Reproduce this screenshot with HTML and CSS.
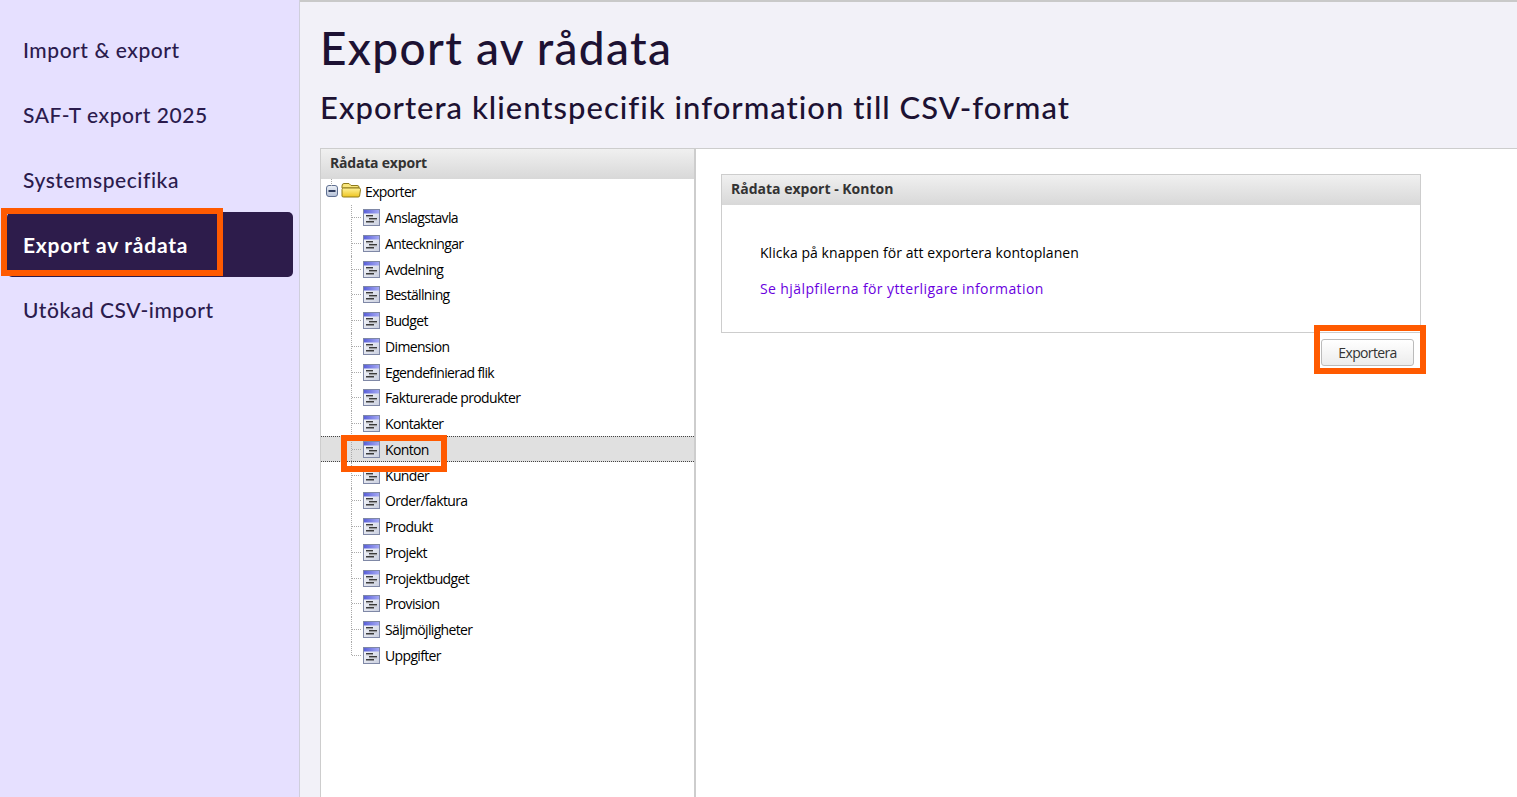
FILE: index.html
```html
<!DOCTYPE html>
<html lang="sv">

<head>
    <meta charset="UTF-8">
    <meta name="viewport" content="width=device-width, initial-scale=1.0">
    <title>Export av rådata</title>
    <link rel="stylesheet" href="styles.css">
</head>

<body>
    <svg class="icon-defs" width="0" height="0" aria-hidden="true">
        <defs>
            <linearGradient id="folder-fill" x1="0" y1="0" x2="0" y2="1">
                <stop offset="0" stop-color="#fff39a" />
                <stop offset="1" stop-color="#eec420" />
            </linearGradient>
            <linearGradient id="doc-fill" x1="0" y1="0" x2="1" y2="1">
                <stop offset="0" stop-color="#fbfcff" />
                <stop offset="1" stop-color="#c9cede" />
            </linearGradient>
            <linearGradient id="doc-bar" x1="0" y1="0" x2="1" y2="0">
                <stop offset="0" stop-color="#5a60d8" />
                <stop offset="1" stop-color="#a4a8f4" />
            </linearGradient>
            <linearGradient id="minus-fill" x1="0" y1="0" x2="0" y2="1">
                <stop offset="0" stop-color="#eef2f8" />
                <stop offset="1" stop-color="#b4c0d6" />
            </linearGradient>
            <symbol id="icon-doc" viewBox="0 0 17 17">
                <rect x="0.5" y="0.5" width="16" height="16" fill="url(#doc-fill)" stroke="#7f88a6" />
                <rect x="1" y="1" width="15" height="3.5" fill="url(#doc-bar)" />
                <rect x="3" y="6" width="7" height="1.5" fill="#3c3c3c" />
                <rect x="3" y="7.5" width="7" height="0.8" fill="#a9a9a9" />
                <rect x="6" y="9" width="8" height="1.5" fill="#3c3c3c" />
                <rect x="6" y="10.5" width="8" height="0.8" fill="#a9a9a9" />
                <rect x="3" y="12" width="8" height="1.5" fill="#3c3c3c" />
            </symbol>
            <symbol id="icon-folder" viewBox="0 0 20 16">
                <path d="M1 4 Q1 1.5 3 1.5 H8 L10 3.5 H16 Q18 3.5 18 5 V6 H1 Z" fill="#f9e67c" stroke="#8f7a1a" />
                <path d="M1 14 Q1 15 2.5 15 H17 Q18.5 15 18.6 14 L19.5 7.5 Q19.5 6 18 6 H2.5 Q1 6 1 7.5 Z" fill="url(#folder-fill)" stroke="#8f7a1a" />
            </symbol>
            <symbol id="icon-minus" viewBox="0 0 12 12">
                <rect x="0.5" y="0.5" width="11" height="11" rx="2.5" fill="url(#minus-fill)" stroke="#5f6f90" />
                <rect x="2.5" y="5" width="7" height="2" fill="#2f3c5c" />
            </symbol>
        </defs>
    </svg>

    <div class="app">
        <nav class="sidebar">
            <a class="nav-item">Import &amp; export</a>
            <a class="nav-item">SAF-T export 2025</a>
            <a class="nav-item">Systemspecifika</a>
            <a class="nav-item active">Export av rådata</a>
            <a class="nav-item">Utökad CSV-import</a>
        </nav>

        <main class="main">
            <header class="page-header">
                <h1>Export av rådata</h1>
                <h2>Exportera klientspecifik information till CSV-format</h2>
            </header>

            <div class="workspace">
                <section class="tree-panel">
                    <div class="panel-title">Rådata export</div>
                    <div class="tree-root">
                        <svg class="icon-minus"><use href="#icon-minus" /></svg>
                        <svg class="icon-folder"><use href="#icon-folder" /></svg>
                        <span>Exporter</span>
                    </div>
                    <ul class="tree-list">
                        <li class="tree-item"><svg class="icon-doc"><use href="#icon-doc" /></svg>Anslagstavla</li>
                        <li class="tree-item"><svg class="icon-doc"><use href="#icon-doc" /></svg>Anteckningar</li>
                        <li class="tree-item"><svg class="icon-doc"><use href="#icon-doc" /></svg>Avdelning</li>
                        <li class="tree-item"><svg class="icon-doc"><use href="#icon-doc" /></svg>Beställning</li>
                        <li class="tree-item"><svg class="icon-doc"><use href="#icon-doc" /></svg>Budget</li>
                        <li class="tree-item"><svg class="icon-doc"><use href="#icon-doc" /></svg>Dimension</li>
                        <li class="tree-item"><svg class="icon-doc"><use href="#icon-doc" /></svg>Egendefinierad flik</li>
                        <li class="tree-item"><svg class="icon-doc"><use href="#icon-doc" /></svg>Fakturerade produkter</li>
                        <li class="tree-item"><svg class="icon-doc"><use href="#icon-doc" /></svg>Kontakter</li>
                        <li class="tree-item selected"><svg class="icon-doc"><use href="#icon-doc" /></svg>Konton</li>
                        <li class="tree-item"><svg class="icon-doc"><use href="#icon-doc" /></svg>Kunder</li>
                        <li class="tree-item"><svg class="icon-doc"><use href="#icon-doc" /></svg>Order/faktura</li>
                        <li class="tree-item"><svg class="icon-doc"><use href="#icon-doc" /></svg>Produkt</li>
                        <li class="tree-item"><svg class="icon-doc"><use href="#icon-doc" /></svg>Projekt</li>
                        <li class="tree-item"><svg class="icon-doc"><use href="#icon-doc" /></svg>Projektbudget</li>
                        <li class="tree-item"><svg class="icon-doc"><use href="#icon-doc" /></svg>Provision</li>
                        <li class="tree-item"><svg class="icon-doc"><use href="#icon-doc" /></svg>Säljmöjligheter</li>
                        <li class="tree-item"><svg class="icon-doc"><use href="#icon-doc" /></svg>Uppgifter</li>
                    </ul>
                </section>

                <section class="detail">
                    <div class="detail-card">
                        <div class="panel-title">Rådata export - Konton</div>
                        <div class="detail-body">
                            <p>Klicka på knappen för att exportera kontoplanen</p>
                            <a class="help-link">Se hjälpfilerna för ytterligare information</a>
                        </div>
                    </div>
                    <div class="detail-actions">
                        <button class="btn">Exportera</button>
                    </div>
                </section>
            </div>
        </main>
    </div>
</body>

</html>
```

FILE: styles.css
```css
*,
*::before,
*::after {
    margin: 0;
    padding: 0;
    box-sizing: border-box;
}

html,
body {
    height: 100%;
    overflow: hidden;
}

body {
    font-family: 'Open Sans', 'Noto Sans', sans-serif;
    color: #000;
    background-color: #f2f1f8;
}

.icon-defs {
    position: absolute;
}

.app {
    display: flex;
    height: 797px;
}

/* Sidebar */
.sidebar {
    width: 300px;
    flex-shrink: 0;
    background-color: #e6e0ff;
    border-right: 1px solid #cfcfdc;
    padding: 17px 6px 0 7px;
}

.nav-item {
    position: relative;
    display: flex;
    align-items: center;
    height: 65px;
    padding: 0 0 1px 16px;
    font-family: 'Lato', 'Noto Sans', sans-serif;
    font-size: 21px;
    font-weight: 500;
    letter-spacing: 0.55px;
    color: #2b1b4d;
    border-radius: 5px;
}

.nav-item.active {
    background-color: #2d1c4b;
    color: #fff;
    font-weight: 700;
    letter-spacing: 0.75px;
}

.nav-item.active::after {
    content: "";
    position: absolute;
    left: -6px;
    top: -4px;
    width: 222px;
    height: 68px;
    border: 6px solid #ff5a00;
}

/* Header */
.main {
    flex: 1;
    display: flex;
    flex-direction: column;
    min-width: 0;
    border-top: 2px solid #c9c9c9;
}

.page-header {
    height: 146px;
    padding: 20px 0 0 20px;
    color: #1d1233;
    font-family: 'Lato', 'Noto Sans', sans-serif;
}

.page-header h1 {
    font-size: 46px;
    font-weight: 500;
    line-height: 52px;
    letter-spacing: 1.3px;
}

.page-header h2 {
    margin-top: 14px;
    font-size: 31px;
    font-weight: 500;
    line-height: 38px;
    letter-spacing: 1px;
}

/* Panels */
.workspace {
    flex: 1;
    display: flex;
    padding-left: 20px;
    min-height: 0;
}

.panel-title {
    height: 30px;
    padding-left: 9px;
    font-family: 'Open Sans', sans-serif;
    font-size: 14px;
    font-weight: 700;
    line-height: 28px;
    letter-spacing: -0.2px;
    color: #333;
    background: linear-gradient(#f0f0f0, #d8d8d8);
}

.tree-panel {
    width: 376px;
    flex-shrink: 0;
    background-color: #fff;
    border-top: 1px solid #cdcdcd;
    border-left: 1px solid #cdcdcd;
    border-right: 2px solid #cdcdcd;
    font-size: 14px;
    letter-spacing: -0.65px;
}

.tree-root {
    position: relative;
    display: flex;
    align-items: center;
    height: 25.7px;
    padding: 0 0 1px 5px;
}

.tree-root::before {
    content: "";
    position: absolute;
    left: 10px;
    top: 0;
    height: 7px;
    border-left: 1px dotted #aaa;
}

.icon-minus {
    width: 12px;
    height: 12px;
}

.icon-folder {
    width: 20px;
    height: 16px;
    margin: -3px 4px 0 3px;
}

.tree-list {
    list-style: none;
}

.tree-item {
    position: relative;
    display: flex;
    align-items: center;
    height: 25.76px;
    padding-left: 42px;
    /* horizontal dotted connector */
    background: repeating-linear-gradient(to right, #aaa 0 1px, transparent 1px 2px) 31px center / 9px 1px no-repeat;
}

/* vertical dotted connector */
.tree-item::before {
    content: "";
    position: absolute;
    left: 30px;
    top: 0;
    height: 100%;
    border-left: 1px dotted #aaa;
}

.tree-item:last-child::before {
    height: 50%;
}

.icon-doc {
    width: 17px;
    height: 17px;
    margin-right: 5px;
    flex-shrink: 0;
}

.tree-item.selected {
    background-color: #e0e0e0;
    border-top: 1px dotted #444;
    border-bottom: 1px dotted #444;
}

.tree-item.selected::after {
    content: "";
    position: absolute;
    left: 20px;
    top: -2px;
    width: 106px;
    height: 37px;
    border: 6px solid #ff5a00;
    z-index: 1;
}

/* Detail */
.detail {
    flex: 1;
    min-width: 0;
    background-color: #fff;
    border-top: 1px solid #cdcdcd;
    padding: 25px 96px 0 25px;
}

.detail-card {
    border: 1px solid #cdcdcd;
}

.detail-card .panel-title {
    letter-spacing: 0;
}

.detail-body {
    height: 127px;
    padding: 38px 0 0 38px;
    font-size: 14px;
    line-height: 20px;
}

.detail-body p {
    margin-bottom: 16px;
    letter-spacing: 0.05px;
}

.help-link {
    color: #6a00e0;
    letter-spacing: 0.4px;
}

.detail-actions {
    display: flex;
    justify-content: flex-end;
    padding: 6px 7px 0 0;
}

.btn {
    position: relative;
    width: 93px;
    height: 27px;
    font-family: 'Open Sans', sans-serif;
    font-size: 14px;
    letter-spacing: -0.65px;
    color: #333;
    background: linear-gradient(#fff, #ececec);
    border: 1px solid #bbb;
    border-radius: 3px;
}

.btn::after {
    content: "";
    position: absolute;
    left: -8px;
    top: -15px;
    width: 112px;
    height: 49px;
    border: 6px solid #ff5a00;
}
```
